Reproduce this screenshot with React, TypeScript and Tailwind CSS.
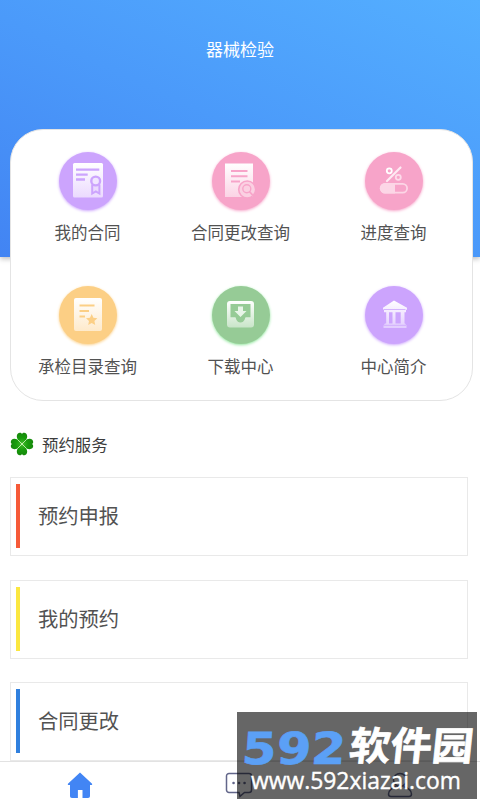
import type { ReactNode } from 'react';

const fade = (id: string, to: string) => (
  <defs>
    <linearGradient id={id} x1="0" y1="0" x2="0" y2="1">
      <stop offset="0" stopColor="#fff" />
      <stop offset="1" stopColor={to} />
    </linearGradient>
  </defs>
);

const services: { name: string; color: string; icon: ReactNode }[] = [
  {
    name: '我的合同',
    color: 'bg-[#cca4fd] shadow-[0_1px_3px_#cca4fd]',
    icon: (
      <>
        {fade('contract', '#ebdafe')}
        <rect x="14" y="11" width="30" height="34.5" rx="1.5" fill="url(#contract)" />
        <path d="M17 17.7h23.3M17 22.7h11.7M17 27.5h9" stroke="#cca4fd" strokeWidth="2.3" />
        <path d="M33.2 32.5v9l3.6-2.2 3.6 2.2v-9" fill="#ebdafe" stroke="#cca4fd" strokeWidth="2" />
        <circle cx="36.7" cy="29" r="4.4" fill="#f1e6ff" stroke="#cca4fd" strokeWidth="2.4" />
      </>
    ),
  },
  {
    name: '合同更改查询',
    color: 'bg-[#f7a4c9] shadow-[0_1px_3px_#f7a4c9]',
    icon: (
      <>
        {fade('change', '#fbd3e5')}
        <path d="M13 11.5h28V45H13z" fill="url(#change)" />
        <path d="M19 19h16.5M19 24.3h16.5M19 29.5h9" stroke="#f7a4c9" strokeWidth="2" />
        <circle cx="35.2" cy="37.5" r="8.5" fill="#fbd0e2" stroke="#f7a4c9" strokeWidth="1.6" />
        <circle cx="34.8" cy="36.8" r="4" fill="none" stroke="#f7a4c9" strokeWidth="1.4" />
        <path d="m37.7 39.9 2.5 2.7" stroke="#f7a4c9" strokeWidth="1.6" strokeLinecap="round" />
      </>
    ),
  },
  {
    name: '进度查询',
    color: 'bg-[#f7a4c9] shadow-[0_1px_3px_#f7a4c9]',
    icon: (
      <>
        <path d="M35.5 15.5 22 29" stroke="#feeaf3" strokeWidth="2.2" strokeLinecap="round" />
        <circle cx="24.3" cy="18.8" r="2.5" fill="none" stroke="#fff" strokeWidth="1.8" />
        <circle cx="33.3" cy="25.3" r="2.5" fill="none" stroke="#fddbea" strokeWidth="1.8" />
        <rect x="15.9" y="31.9" width="26.2" height="8.8" rx="4.4" fill="none" stroke="#fcd6e6" strokeWidth="1.8" />
        <path d="M20 31h10v10.5H20a5 5 0 0 1 0-10.5z" fill="#fcd6e6" />
      </>
    ),
  },
  {
    name: '承检目录查询',
    color: 'bg-[#fccf85] shadow-[0_1px_3px_#fccf85]',
    icon: (
      <>
        {fade('catalog', '#feeacb')}
        <rect x="15" y="12" width="28" height="33" rx="2" fill="url(#catalog)" />
        <path d="M20.5 19.5h15M20.5 25h9.5M20.5 30.5h5.5" stroke="#fccf85" strokeWidth="2.2" />
        <path d="m32.7 28 1.7 3.7 4 .5-3 2.7.8 4-3.5-2-3.5 2 .8-4-3-2.7 4-.5z" fill="#fccf85" />
      </>
    ),
  },
  {
    name: '下载中心',
    color: 'bg-[#96cb96] shadow-[0_1px_3px_#8ee59a]',
    icon: (
      <>
        {fade('download', '#c9e5c9')}
        <rect x="15" y="15" width="27" height="26.5" rx="3" fill="url(#download)" />
        <path d="M18.5 18h20v13.2h-4.8c-.8 0-.8 5.3-5.2 5.3s-4.4-5.3-5.2-5.3h-4.8z" fill="#96cb96" />
        <path d="M26 20.5h5V25h3.5l-6 6-6-6H26z" fill="#e8f5e8" />
      </>
    ),
  },
  {
    name: '中心简介',
    color: 'bg-[#cca4fd] shadow-[0_1px_3px_#cca4fd]',
    icon: (
      <>
        {fade('about', '#e2ccfe')}
        <path
          d="M29 14.5 42 21.8v2h-1v2.500h-1.500v11.200h.5l1.500 2v2.500h-23v-2.500l1.500-2h1.200V26.300h-2.200v-2.500h-1v-2zM24 26.300v11.200h3.500V26.300zm6.500 0v11.200h5.200V26.300z"
          fill="url(#about)"
        />
        <path d="M18.5 23.5h22M18.5 39.3h22.5" stroke="#cca4fd" strokeWidth=".8" />
      </>
    ),
  },
];

const bookings = [
  { name: '预约申报', bar: 'bg-[#f65a38]' },
  { name: '我的预约', bar: 'bg-[#fbe740]' },
  { name: '合同更改', bar: 'bg-[#3080de]' },
];

export default function App() {
  return (
    <div className="relative flex h-[800px] w-[480px] flex-col overflow-hidden bg-white font-['Noto_Sans_CJK_SC',sans-serif] text-[#525252]">
      <header className="h-[257px] shrink-0 bg-[linear-gradient(25deg,#4284f3_0%,#4b9afa_50%,#54afff_100%)] pt-[37px] text-center text-[17px] leading-6 text-white shadow-[0_2px_5px_rgba(0,0,0,0.25)]">
        器械检验
      </header>
      <section className="z-10 mr-[7px] ml-[10px] -mt-[128px] grid h-[272px] shrink-0 auto-rows-[134px] grid-cols-3 rounded-[33px] border border-[#e4e4e4] bg-white pt-[22px] pr-[2px]">
        {services.map((s) => (
          <Service key={s.name} {...s} />
        ))}
      </section>
      <h2 className="mt-[31px] ml-[10px] flex h-6 shrink-0 items-center gap-2 text-[16.4px] leading-6 text-[#3c3c3c]">
        <Clover />
        预约服务
      </h2>
      <main className="mt-[21px] mr-3 ml-[10px] flex min-h-0 flex-1 flex-col gap-[23.6px] overflow-hidden">
        {bookings.map((b) => (
          <div key={b.name} className="flex h-[79px] shrink-0 items-start border-[1.5px] border-[#e9e9e9] pt-[6px] pl-[5px]">
            <div className={`h-16 w-1 ${b.bar}`} />
            <span className="mt-[15px] ml-[18px] text-[20.3px] leading-8">{b.name}</span>
          </div>
        ))}
      </main>
      <nav className="flex h-[39px] shrink-0 justify-around border-t border-[#e2e2e2] pt-[10px]">
        <svg className="h-[26px] w-[26px]" viewBox="0 0 26 26">
          <path
            d="M13 .5 24.8 11.500c.8.8.4 1.500-.5 1.500H23v10.800c0 1.500-.7 2.200-2 2.200h-5.500v-8h-4.600v8H5c-1.300 0-2-.7-2-2.200V13H1.700c-.9 0-1.300-.7-.5-1.500z"
            fill="#4285f4"
          />
        </svg>
        <svg className="h-[26px] w-[26px] overflow-visible" viewBox="0 0 26 26" fill="none" stroke="#62668a" strokeWidth="1.5">
          <path d="M2 1.5h20a2.500 2.500 0 0 1 2.500 2.500v14a2.500 2.500 0 0 1-2.500 2.500h-4.500l-4.500 3.800-1-3.800H2A2.500 2.500 0 0 1-.5 18V4A2.500 2.500 0 0 1 2 1.500z" />
          <path d="M6.500 11h.1M12 11h.1M17.500 11h.1" strokeWidth="2.5" strokeLinecap="round" />
        </svg>
        <svg className="h-[26px] w-[26px]" viewBox="0 0 26 26" fill="none" stroke="#62668a" strokeWidth="1.5">
          <circle cx="13" cy="8" r="6.5" />
          <path d="M9.500 14.500C5 16 1.500 19 1.500 22q0 2.500 2.500 2.500h18q2.500 0 2.500-2.500c0-3-3.500-6-8-7.500" />
        </svg>
      </nav>
      <Watermark />
    </div>
  );
}

function Service({ name, color, icon }: { name: string; color: string; icon: ReactNode }) {
  return (
    <div className="flex flex-col items-center">
      <div className={`h-[58px] w-[58px] rounded-full ${color}`}>
        <svg viewBox="0 0 58 58">{icon}</svg>
      </div>
      <span className="mt-[10px] text-[16.5px] leading-6 whitespace-nowrap">{name}</span>
    </div>
  );
}

function Clover() {
  const leaf = 'M12 11.500C9.500 9.500 7 8 6.800 4.600 6.700 2.200 8.200.8 9.900.8c1 0 1.700.5 2.100 1.300.4-.8 1.100-1.300 2.100-1.300 1.700 0 3.200 1.400 3.100 3.800C17 8 14.500 9.500 12 11.500z';
  return (
    <svg className="h-6 w-6" viewBox="0 0 24 24">
      <defs>
        <radialGradient id="leaf" gradientUnits="userSpaceOnUse" cx="12" cy="12" r="11">
          <stop offset="0" stopColor="#45bd2c" />
          <stop offset=".55" stopColor="#189c0c" />
          <stop offset="1" stopColor="#16890b" />
        </radialGradient>
      </defs>
      {[0, 90, 180, 270].map((a) => (
        <path key={a} d={leaf} fill="url(#leaf)" transform={`rotate(${a} 12 12)`} />
      ))}
      <path d="m7.500 7.500 9 9M16.500 7.500l-9 9" stroke="#c0eda9" strokeWidth=".9" />
    </svg>
  );
}

function Watermark() {
  return (
    <div className="absolute top-[712px] left-[237px] z-20 h-[87px] w-[240px] bg-black/60">
      <svg className="h-full w-full" viewBox="0 0 240 87">
        <text
          transform="translate(4 51.5) skewX(-4)"
          textLength="104"
          lengthAdjust="spacingAndGlyphs"
          className="fill-[#5ba0f6] stroke-[#5ba0f6] font-['DejaVu_Sans',sans-serif] text-[44px] font-bold"
          strokeWidth=".6"
        >
          592
        </text>
        <text
          transform="translate(111 48) skewX(-6)"
          textLength="124"
          lengthAdjust="spacingAndGlyphs"
          className="fill-white stroke-white text-[39px] font-bold"
          strokeWidth=".7"
        >
          软件园
        </text>
        <text
          x="14"
          y="77"
          textLength="210"
          lengthAdjust="spacingAndGlyphs"
          className="fill-white stroke-white font-['Open_Sans',sans-serif] text-[23px] font-medium"
          strokeWidth=".4"
        >
          www.592xiazai.com
        </text>
      </svg>
    </div>
  );
}
